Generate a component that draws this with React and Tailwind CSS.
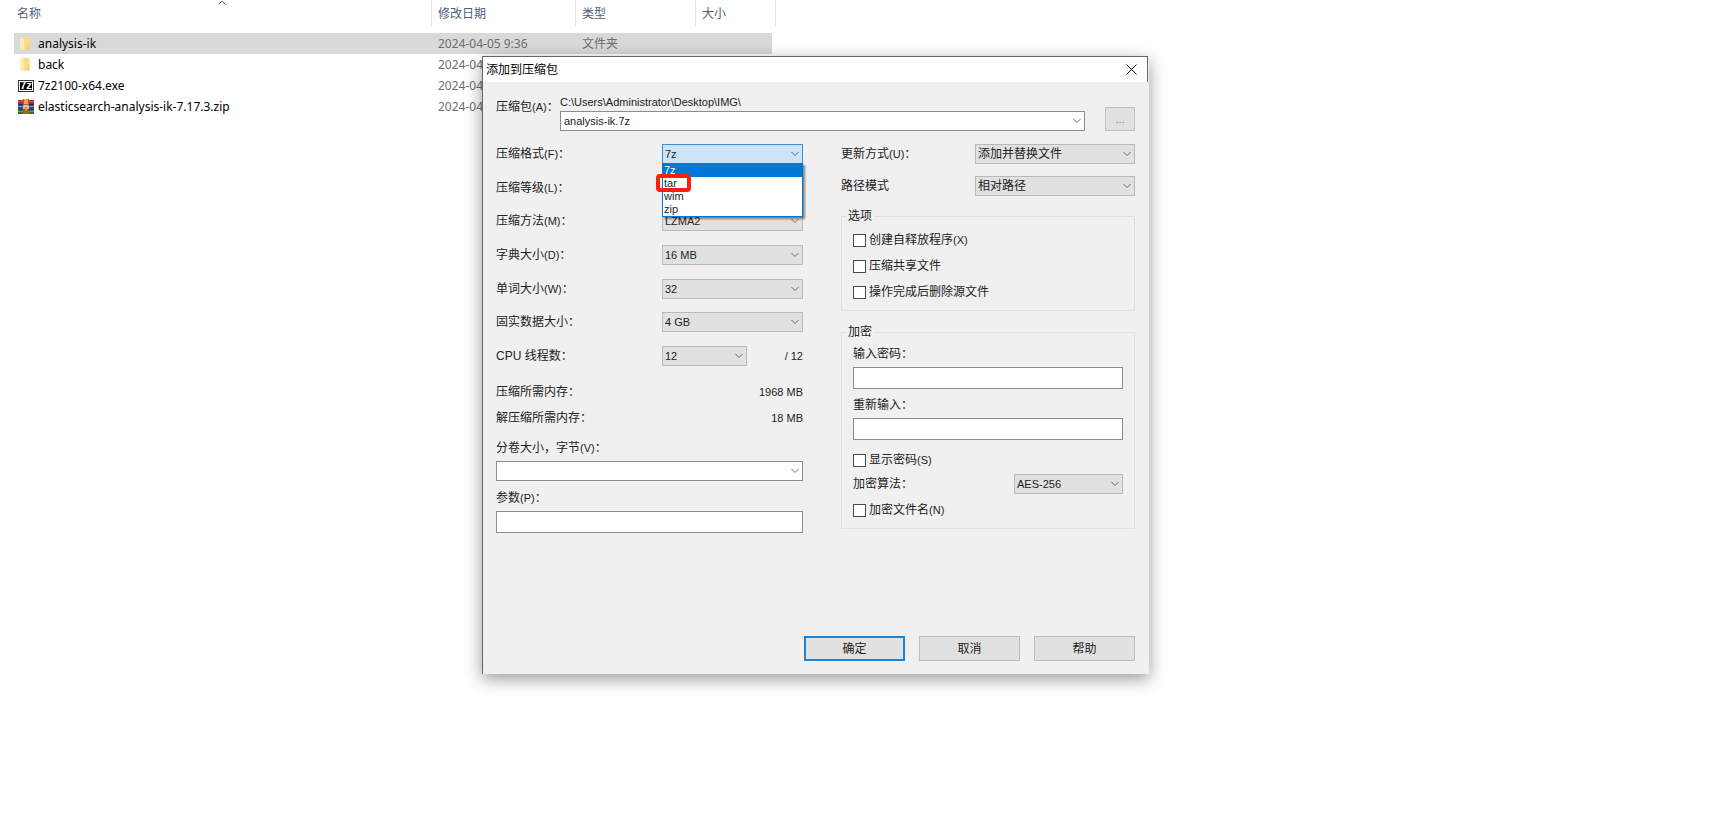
import { useState } from 'react'

// type stays empty where the dialog covers the column
const FILES = [
	{ name: 'analysis-ik', date: '2024-04-05 9:36', type: '文件夹', icon: 'folder', selected: true },
	{ name: 'back', date: '2024-04', icon: 'folder' },
	{ name: '7z2100-x64.exe', date: '2024-04', icon: '7z' },
	{ name: 'elasticsearch-analysis-ik-7.17.3.zip', date: '2024-04', icon: 'rar' },
]

const FORMATS = ['7z', 'tar', 'wim', 'zip']

function FolderIcon() {
	return (
		<svg viewBox="0 0 16 16" className="h-4 w-4 shrink-0">
			<path d="M4 1h7.500v12.500H4z" fill="#fbdc83" />
			<path d="M9.500 8.500 11.500 8v5.500H9z" fill="#f5cf6b" />
			<path d="M2 1.500 6.500 2.500v12L2 13z" fill="#fdebb5" />
			<path d="M6.500 2.500v12l1-1V3z" fill="#f7d780" />
		</svg>
	)
}

function SevenZipIcon() {
	return (
		<span className="flex h-3 w-4 shrink-0 items-center justify-center border border-[#333] bg-black font-['Liberation_Sans',sans-serif] text-[11px] leading-none font-bold text-white outline-1 -outline-offset-2 outline-white">
			7z
		</span>
	)
}

function RarIcon() {
	return (
		<svg viewBox="0 0 16 16" className="h-4 w-4 shrink-0">
			<rect x="0" y="1" width="16" height="5" fill="#b3243f" />
			<rect x="0" y="6" width="16" height="4" fill="#3d48b8" />
			<rect x="0" y="10" width="16" height="5" fill="#217a32" />
			<path d="M0 5.500h16M0 10h16" stroke="#2b2340" />
			<path d="M0 2.500h16" stroke="#d8506a" />
			<path d="M0 7.500h16" stroke="#7b86e0" />
			<path d="M0 12.500h16" stroke="#48b056" />
			<rect x="5" y="0" width="6" height="15" fill="#a8602a" />
			<rect x="6" y="0" width="4" height="5" fill="#f2a83a" />
			<rect x="5" y="6" width="6" height="5" fill="#8a4f35" />
			<path d="M6 10V7h4v3" stroke="#f3e6d0" strokeWidth="1.4" fill="none" />
			<rect x="7" y="8" width="2" height="4" fill="#e8862c" />
		</svg>
	)
}

function FileIcon({ kind }) {
	if (kind === 'folder') return <FolderIcon />
	if (kind === '7z') return <SevenZipIcon />
	return <RarIcon />
}

function Chevron() {
	return (
		<svg viewBox="0 0 8 5" className="pointer-events-none absolute top-1/2 right-1 h-[5px] w-2 -translate-y-1/2" fill="none" stroke="#6a6a6a">
			<path d="M.5.5 4 4 7.5.5" />
		</svg>
	)
}

// The access key is set one pixel smaller than the Chinese text before it
function Caption({ text, hotkey, colon }) {
	return (
		<>
			{text}
			{hotkey && <span className="text-[11px]">({hotkey})</span>}
			{colon && '：'}
		</>
	)
}

function Select({ id, value, options = [value], className = '', open, big, children }) {
	return (
		<div className={`relative ${className}`}>
			<select
				id={id}
				defaultValue={value}
				className={`block h-5 w-full appearance-none border pr-4 pl-0.5 leading-4 outline-none ${big ? 'text-xs' : 'text-[11px]'} ${open ? 'border-[#3c8fd0] bg-[#cce4f7]' : 'border-[#b9b9b9] bg-[#e1e1e1]'}`}
			>
				{options.map(o => <option key={o}>{o}</option>)}
			</select>
			<Chevron />
			{children}
		</div>
	)
}

function Field({ id, text, hotkey, colon = true, children }) {
	return (
		<div className="flex h-5 items-center justify-between">
			<label htmlFor={id}><Caption text={text} hotkey={hotkey} colon={colon} /></label>
			{children}
		</div>
	)
}

function Check({ id, text, hotkey, className = '' }) {
	return (
		<div className={`flex h-4 items-center gap-[3px] ${className}`}>
			<input id={id} type="checkbox" className="h-[13px] w-[13px] appearance-none border border-[#4a4a4a] bg-white checked:bg-[#0078d7]" />
			<label htmlFor={id}><Caption text={text} hotkey={hotkey} /></label>
		</div>
	)
}

function Group({ title, className = '', children }) {
	return (
		<fieldset className={`min-w-0 border border-[#e0e0e0] px-[11px] pb-[10px] ${className}`}>
			<legend className="-ml-[7px] px-0.5">{title}</legend>
			{children}
		</fieldset>
	)
}

function FileList() {
	return (
		<table className="ml-[14px] w-[762px] table-fixed border-separate border-spacing-0 text-left font-['Noto_Sans','Noto_Sans_CJK_SC',sans-serif] text-xs leading-4">
			<colgroup>
				<col className="w-[418px]" />
				<col className="w-[144px]" />
				<col className="w-[120px]" />
				<col className="w-[80px]" />
			</colgroup>
			<thead className="text-[#4c607a]">
				<tr className="h-[27px]">
					<th className="relative border-r border-[#e5e5e5] pl-[3px] font-normal">
						名称
						<svg viewBox="0 0 8 5" className="absolute top-0 left-[204px] h-[5px] w-2" fill="none" stroke="#5a5a5a">
							<path d="M.5 4.500 4 1l3.500 3.500" />
						</svg>
					</th>
					<th className="border-r border-[#e5e5e5] pl-1.5 font-normal">修改日期</th>
					<th className="border-r border-[#e5e5e5] pl-1.5 font-normal">类型</th>
					<th className="border-r border-[#e5e5e5] pl-1.5 font-normal">大小</th>
				</tr>
				<tr className="h-1.5"><td colSpan={4} /></tr>
			</thead>
			<tbody>
				{FILES.map(f => (
					<tr key={f.name} className={f.selected ? 'h-[21px] *:bg-[#d9d9d9]' : 'h-[21px]'}>
						<td className="pl-1">
							<div className="flex items-center gap-1 text-black"><FileIcon kind={f.icon} />{f.name}</div>
						</td>
						<td className="pl-1.5 text-[#6d6d6d]">{f.date}</td>
						<td className="pl-1.5 text-[#6d6d6d]">{f.type}</td>
						<td className="border-r-4 border-white" />
					</tr>
				))}
			</tbody>
		</table>
	)
}

function FormatList({ active, onPick }) {
	return (
		<ul role="listbox" aria-label="压缩格式" className="absolute top-[19px] left-0 z-10 w-full border border-[#0078d7] bg-white text-[11px] leading-[13px] shadow-[2px_2px_2px_rgba(0,0,0,0.45)]">
			{FORMATS.map(f => (
				<li
					key={f}
					role="option"
					aria-selected={f === active}
					onClick={() => onPick(f)}
					className={`relative pl-px ${f === active ? 'bg-[#0078d7] text-white' : ''}`}
				>
					{f}
					{f === 'tar' && <span className="absolute -top-[3px] -left-[7px] h-[18px] w-[35px] rounded-[4px] border-4 border-[#ff1c12]" />}
				</li>
			))}
		</ul>
	)
}

function ArchiveDialog() {
	const [format, setFormat] = useState('7z')
	const box = 'block w-full border border-[#8c8c8c] bg-white px-[3px] text-[11px] outline-none'
	const btn = 'h-[25px] w-[101px] border bg-[#e1e1e1]'

	return (
		<div
			role="dialog"
			aria-label="添加到压缩包"
			className="absolute top-14 left-[482px] flex min-h-[618px] w-[667px] flex-col border-l border-[#666] bg-[#f0f0f0] font-['Liberation_Sans','Noto_Sans_CJK_SC',sans-serif] text-xs leading-4 text-[#222] shadow-[0_5px_16px_rgba(0,0,0,0.4)]"
		>
			<div className="mr-px flex h-[26px] items-center justify-between border-t border-r border-[#666] bg-white pr-2.5 pl-[3px] text-black">
				<h1>添加到压缩包</h1>
				<button type="button" aria-label="关闭" className="h-[11px] w-[11px]">
					<svg viewBox="0 0 11 11" className="h-full w-full" stroke="#000"><path d="M.5.5l10 10M10.500.5l-10 10" /></svg>
				</button>
			</div>

			<form className="flex flex-1 flex-col pt-[12px] pr-3.5 pb-[13px] pl-[13px]" onSubmit={e => e.preventDefault()}>
				<div className="flex items-end">
					<label htmlFor="archive" className="mb-4 w-16"><Caption text="压缩包" hotkey="A" colon /></label>
					<div className="flex-1">
						<div className="mb-px text-[11px]">C:\Users\Administrator\Desktop\IMG\</div>
						<div className="relative">
							<input id="archive" defaultValue="analysis-ik.7z" className={`${box} h-5`} />
							<Chevron />
						</div>
					</div>
					<button type="button" className="ml-5 h-6 w-[30px] border border-[#bfbfbf] bg-[#e1e1e1] text-[11px] text-[#777]">...</button>
				</div>

				<div className="mt-[13px] grid grid-cols-[307px_1fr] gap-x-[38px]">
					<div>
						<div className="flex h-[222px] flex-col justify-between">
							<Field id="format" text="压缩格式" hotkey="F">
								<Select id="format" value={format} options={FORMATS} className="w-[141px]" open>
									<FormatList active={format} onPick={setFormat} />
								</Select>
							</Field>
							<Field id="level" text="压缩等级" hotkey="L"><Select id="level" value="" className="w-[141px]" /></Field>
							<Field id="method" text="压缩方法" hotkey="M"><Select id="method" value="LZMA2" className="w-[141px]" /></Field>
							<Field id="dict" text="字典大小" hotkey="D"><Select id="dict" value="16 MB" className="w-[141px]" /></Field>
							<Field id="word" text="单词大小" hotkey="W"><Select id="word" value="32" className="w-[141px]" /></Field>
							<Field id="solid" text="固实数据大小"><Select id="solid" value="4 GB" className="w-[141px]" /></Field>
							<Field id="threads" text="CPU 线程数">
								<div className="flex w-[141px] items-center justify-between">
									<Select id="threads" value="12" className="w-[85px]" />
									<span className="text-[11px]">/ 12</span>
								</div>
							</Field>
						</div>
						<dl className="mt-[18px] grid grid-cols-[1fr_auto] gap-y-2.5">
							<dt>压缩所需内存：</dt>
							<dd className="text-right text-[11px]">1968 MB</dd>
							<dt>解压缩所需内存：</dt>
							<dd className="text-right text-[11px]">18 MB</dd>
						</dl>
						<label htmlFor="volume" className="mt-3.5 block"><Caption text="分卷大小，字节" hotkey="V" colon /></label>
						<div className="relative mt-[5px]">
							<input id="volume" className={`${box} h-5`} />
							<Chevron />
						</div>
						<label htmlFor="params" className="mt-[9px] block"><Caption text="参数" hotkey="P" colon /></label>
						<input id="params" className={`${box} mt-[5px] h-[22px]`} />
					</div>

					<div>
						<div className="flex flex-col gap-3">
							<Field id="update" text="更新方式" hotkey="U"><Select id="update" value="添加并替换文件" className="w-40" big /></Field>
							<Field id="paths" text="路径模式" colon={false}><Select id="paths" value="相对路径" className="w-40" big /></Field>
						</div>
						<Group title="选项" className="mt-3">
							<div className="flex flex-col gap-2.5 pt-2">
								<Check id="sfx" text="创建自释放程序" hotkey="X" />
								<Check id="shared" text="压缩共享文件" />
								<Check id="remove" text="操作完成后删除源文件" />
							</div>
						</Group>
						<Group title="加密" className="mt-[13px]">
							<label htmlFor="pwd" className="mt-1.5 block">输入密码：</label>
							<input id="pwd" type="password" className={`${box} mt-[5px] h-[22px]`} />
							<label htmlFor="pwd2" className="mt-2 block">重新输入：</label>
							<input id="pwd2" type="password" className={`${box} mt-[5px] h-[22px]`} />
							<Check id="show" text="显示密码" hotkey="S" className="mt-3 mb-1.5" />
							<Field id="cipher" text="加密算法"><Select id="cipher" value="AES-256" className="w-[109px]" /></Field>
							<Check id="names" text="加密文件名" hotkey="N" className="mt-2" />
						</Group>
					</div>
				</div>

				<div className="mt-auto flex justify-end gap-3.5">
					<button type="submit" className={`${btn} border-2 border-[#1883d7]`}>确定</button>
					<button type="button" className={`${btn} border-[#bdbdbd]`}>取消</button>
					<button type="button" className={`${btn} border-[#bdbdbd]`}>帮助</button>
				</div>
			</form>
		</div>
	)
}

export default function App() {
	return (
		<main lang="zh-CN" className="relative min-h-screen bg-white">
			<FileList />
			<ArchiveDialog />
		</main>
	)
}
